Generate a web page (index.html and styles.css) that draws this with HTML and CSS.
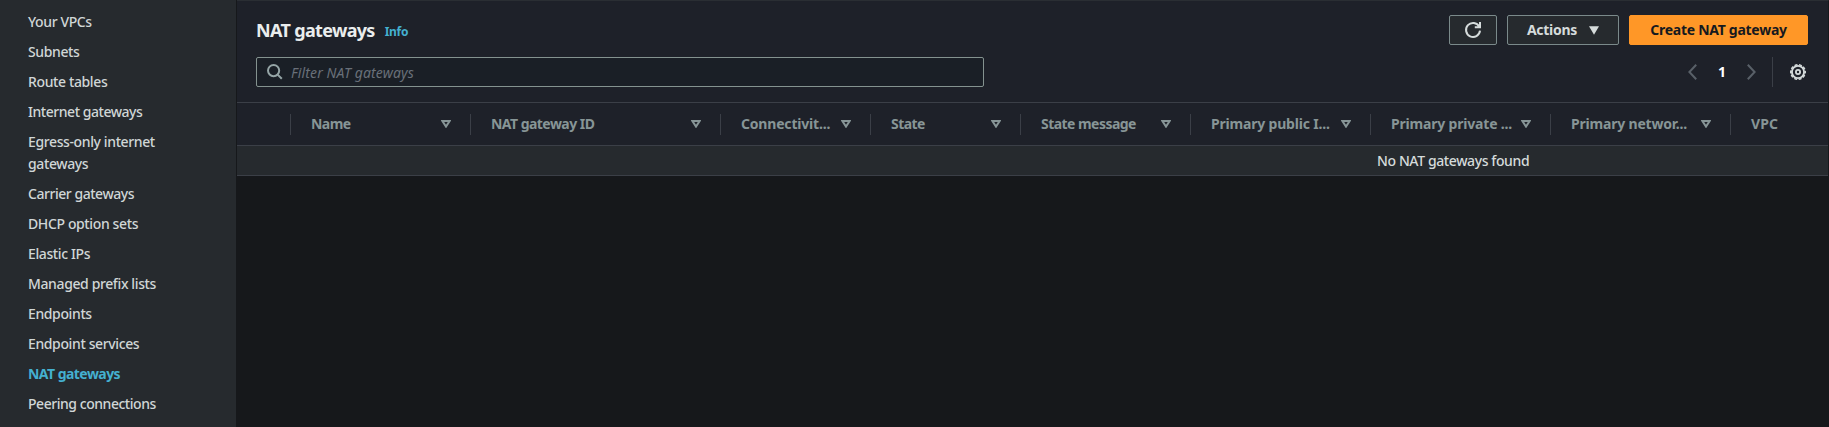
FILE: index.html
```
<!DOCTYPE html>
<html lang="en">
<head>
<meta charset="utf-8">
<title>NAT gateways</title>
<link rel="stylesheet" href="styles.css">
</head>
<body>
<div class="app">
  <nav class="sidebar">
    <a class="nav-item">Your VPCs</a>
    <a class="nav-item">Subnets</a>
    <a class="nav-item">Route tables</a>
    <a class="nav-item tight">Internet gateways</a>
    <a class="nav-item">Egress-only internet<br>gateways</a>
    <a class="nav-item tight">Carrier gateways</a>
    <a class="nav-item">DHCP option sets</a>
    <a class="nav-item">Elastic IPs</a>
    <a class="nav-item">Managed prefix lists</a>
    <a class="nav-item">Endpoints</a>
    <a class="nav-item">Endpoint services</a>
    <a class="nav-item active">NAT gateways</a>
    <a class="nav-item tight">Peering connections</a>
  </nav>
  <main class="main">
    <section class="panel">
      <header class="panel-header">
        <div class="title-row">
          <h1 class="title">NAT gateways</h1>
          <a class="info">Info</a>
          <div class="actions">
            <button class="btn btn-icon" aria-label="Refresh">
              <svg width="18" height="18" viewBox="0 0 18 18" fill="none" stroke="#d5dbdb" stroke-width="2"><path d="M15.2 5.6A7 7 0 1 0 16 9.7M16 1v5.2h-5.2"/></svg>
            </button>
            <button class="btn btn-actions"><span>Actions</span>
              <svg width="10" height="9" viewBox="0 0 10 9"><path d="M0 0.3h10L5 8.8z" fill="#d5dbdb"/></svg>
            </button>
            <button class="btn btn-primary">Create NAT gateway</button>
          </div>
        </div>
        <div class="filter-row">
          <div class="search">
            <svg width="16" height="16" viewBox="0 0 16 16" fill="none" stroke="#95a5a6" stroke-width="2"><circle cx="6.6" cy="6.6" r="5.6"/><path d="M10.6 10.6l4.2 4.2"/></svg>
            <span class="placeholder">Filter NAT gateways</span>
          </div>
          <div class="pager">
            <svg width="9" height="16" viewBox="0 0 9 16" fill="none" stroke="#596068" stroke-width="2"><path d="M8.2 .8L1.4 8l6.8 7.2"/></svg>
            <span class="page">1</span>
            <svg width="9" height="16" viewBox="0 0 9 16" fill="none" stroke="#596068" stroke-width="2"><path d="M.8 .8L7.6 8L.8 15.2"/></svg>
            <span class="separator"></span>
            <svg class="gear" width="16" height="16" viewBox="0 0 16 16" fill="none" stroke="#d5dbdb"><circle cx="8" cy="8" r="6.1" stroke-width="1.9"/><circle cx="8" cy="8" r="7.3" stroke-width="1.4" stroke-dasharray="3 1.587" stroke-dashoffset="1.5"/><circle cx="8" cy="8" r="2.1" stroke-width="1.8"/></svg>
          </div>
        </div>
      </header>
      <div class="table-head">
        <div class="cell"></div>
        <div class="cell tight"><span>Name</span><svg class="sort" viewBox="0 0 10 8"><path d="M1.4 1h7.2L5 6.6z"/></svg></div>
        <div class="cell tight"><span>NAT gateway ID</span><svg class="sort" viewBox="0 0 10 8"><path d="M1.4 1h7.2L5 6.6z"/></svg></div>
        <div class="cell"><span>Connectivit...</span><svg class="sort" viewBox="0 0 10 8"><path d="M1.4 1h7.2L5 6.6z"/></svg></div>
        <div class="cell tight"><span>State</span><svg class="sort" viewBox="0 0 10 8"><path d="M1.4 1h7.2L5 6.6z"/></svg></div>
        <div class="cell tight"><span>State message</span><svg class="sort" viewBox="0 0 10 8"><path d="M1.4 1h7.2L5 6.6z"/></svg></div>
        <div class="cell"><span>Primary public I...</span><svg class="sort" viewBox="0 0 10 8"><path d="M1.4 1h7.2L5 6.6z"/></svg></div>
        <div class="cell"><span>Primary private ...</span><svg class="sort" viewBox="0 0 10 8"><path d="M1.4 1h7.2L5 6.6z"/></svg></div>
        <div class="cell"><span>Primary networ...</span><svg class="sort" viewBox="0 0 10 8"><path d="M1.4 1h7.2L5 6.6z"/></svg></div>
        <div class="cell last"><span>VPC</span></div>
      </div>
      <div class="empty"><span>No NAT gateways found</span></div>
    </section>
  </main>
</div>
</body>
</html>
```
FILE: styles.css
```
* { box-sizing: border-box; }
body { margin: 0; background: #16181b; font-family: "Noto Sans", "Open Sans", sans-serif; font-size: 14px; line-height: 22px; color: #d5dbdb; }
.app { display: flex; height: 427px; overflow: hidden; }
.sidebar { width: 237px; flex: none; background: #262a2e; border-right: 1px solid #16181b; padding: 11px 28px 0; display: flex; flex-direction: column; align-items: flex-start; gap: 8px; }
.nav-item { color: #d0d6d6; font-weight: 500; white-space: nowrap; letter-spacing: -0.38px; }
.nav-item.tight { letter-spacing: -0.46px; }
.nav-item.active { color: #44b0d0; font-weight: 700; letter-spacing: -0.54px; }
.main { flex: 1; min-width: 0; }
.panel { background: #1e2129; border-top: 1px solid #2a2e33; border-right: 1px solid #16181b; }
.panel-header { height: 102px; padding: 14px 20px 0 19px; border-bottom: 1px solid #3b3f47; display: flex; flex-direction: column; gap: 12px; }
.title-row, .filter-row { display: flex; height: 30px; align-items: center; }
.title { margin: 0; font-size: 18px; line-height: 30px; font-weight: 700; color: #eaeded; letter-spacing: -0.67px; }
.info { font-size: 12px; font-weight: 700; color: #44b0d0; margin-left: 10px; padding-top: 4px; letter-spacing: -0.3px; }
.actions { display: flex; gap: 10px; margin-left: auto; }
.btn { height: 30px; border: 1px solid #7b8a8b; border-radius: 2px; background: #262a2e; color: #d5dbdb; font: 700 14px/22px "Noto Sans", "Open Sans", sans-serif; letter-spacing: -0.27px; display: flex; align-items: center; justify-content: center; padding: 0; white-space: nowrap; }
.btn-icon { width: 48px; }
.btn-actions { width: 112px; gap: 12px; }
.btn-primary { width: 179px; background: #ff9727; border-color: #ff9727; color: #16191f; }
.search { width: 728px; height: 30px; border: 1px solid #84928f; border-radius: 2px; background: #1a1f26; display: flex; align-items: center; padding-left: 10px; gap: 8px; }
.placeholder { font-style: italic; color: #697079; padding-top: 2px; letter-spacing: 0.12px; }
.pager { display: flex; align-items: center; margin-left: auto; height: 30px; }
.page { width: 50px; text-align: center; color: #fff; font-weight: 700; }
.separator { width: 1px; height: 30px; background: #3b3f47; margin: 0 17px 0 16px; }
.gear { margin-right: 2px; }
.table-head { display: grid; grid-template-columns: 54px 180px 250px 150px 150px 170px 180px 180px 180px 1fr; height: 43px; align-items: center; border-bottom: 1px solid #3b3f47; }
.cell { height: 21px; border-right: 1px solid #3b3f47; padding: 0 19px 0 20px; display: flex; align-items: center; justify-content: space-between; color: #879596; font-weight: 700; white-space: nowrap; letter-spacing: -0.19px; }
.cell.tight { letter-spacing: -0.54px; }
.cell.last { border-right: 0; letter-spacing: 0.1px; }
.sort { width: 10px; height: 8px; flex: none; fill: none; stroke: #879596; stroke-width: 2; }
.empty { height: 30px; background: #262a2e; border-bottom: 1px solid #3b3f47; padding-left: 1140px; color: #d5dbdb; font-weight: 500; line-height: 30px; white-space: nowrap; letter-spacing: -0.39px; }
```
